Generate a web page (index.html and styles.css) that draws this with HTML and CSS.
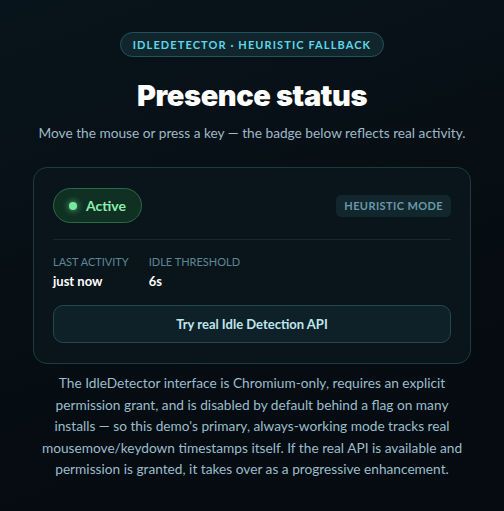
FILE: index.html
```html
<!DOCTYPE html>
<html lang="en">
<head>
<meta charset="utf-8">
<link rel="stylesheet" href="styles.css">
</head>
<body>
<main class="page">
  <div class="eyebrow">IDLEDETECTOR · HEURISTIC FALLBACK</div>
  <h1 class="title">Presence status</h1>
  <p class="subtitle">Move the mouse or press a key — the badge below reflects real activity.</p>
  <section class="card">
    <div class="card-top">
      <div class="status"><span class="dot"></span><span class="status-text">Active</span></div>
      <div class="mode">HEURISTIC MODE</div>
    </div>
    <div class="stats">
      <div class="stat">
        <div class="stat-label">LAST ACTIVITY</div>
        <div class="stat-value">just now</div>
      </div>
      <div class="stat">
        <div class="stat-label">IDLE THRESHOLD</div>
        <div class="stat-value">6s</div>
      </div>
    </div>
    <button class="try">Try real Idle Detection API</button>
  </section>
  <p class="note">The IdleDetector interface is Chromium-only, requires an explicit permission grant, and is disabled by default behind a flag on many installs — so this demo's primary, always-working mode tracks real mousemove/keydown timestamps itself. If the real API is available and permission is granted, it takes over as a progressive enhancement.</p>
</main>
</body>
</html>
```
FILE: styles.css
```css
html, body {
  margin: 0;
  height: 100%;
}
body {
  background: linear-gradient(160deg, #08141b 0%, #060d12 60%, #050b10 100%);
  font-family: Lato, "Noto Sans", sans-serif;
  color: #d8e6ec;
}
.page {
  display: flex;
  flex-direction: column;
  align-items: center;
  padding: 32px 33px 0 33px;
}
.eyebrow {
  font-size: 11px;
  font-weight: 700;
  letter-spacing: 1.1px;
  color: #5fd6ea;
  background: #10262c;
  border: 1px solid #24525a;
  border-radius: 999px;
  padding: 4px 12px;
  line-height: 15px;
}
.title {
  margin: 21px 0 0 0;
  font-family: Inter, "Noto Sans", sans-serif;
  font-size: 29px;
  font-weight: 900;
  color: #ffffff;
  line-height: 36px;
  letter-spacing: -0.4px;
}
.subtitle {
  margin: 9px 0 0 0;
  font-size: 13.7px;
  color: #9fb9c6;
  line-height: 20px;
  white-space: nowrap;
}
.card {
  margin-top: 24px;
  width: 100%;
  box-sizing: border-box;
  background: #0a151b;
  border: 1px solid #1c3b43;
  border-radius: 14px;
  padding: 20px 19px 20px 19px;
}
.card-top {
  display: flex;
  align-items: center;
  justify-content: space-between;
  padding-bottom: 16px;
  border-bottom: 1px solid #17282e;
}
.status {
  display: flex;
  align-items: center;
  gap: 9px;
  height: 33px;
  padding: 0 15px 0 15px;
  background: #0f3022;
  border: 1px solid #2a6a46;
  border-radius: 999px;
}
.dot {
  width: 8px;
  height: 8px;
  border-radius: 50%;
  background: #7ae9a0;
  box-shadow: 0 0 6px 1px rgba(122, 233, 160, 0.55);
}
.status-text {
  font-size: 14px;
  font-weight: 700;
  color: #8cefad;
}
.mode {
  font-size: 11px;
  font-weight: 700;
  letter-spacing: 0.4px;
  color: #6a98a8;
  background: #11262d;
  border-radius: 5px;
  padding: 3px 8px;
  line-height: 16px;
}
.stats {
  display: flex;
  gap: 20px;
  margin-top: 14px;
}
.stat-label {
  font-size: 11px;
  color: #5d8797;
  line-height: 15px;
}
.stat-value {
  font-size: 13px;
  font-weight: 700;
  color: #ffffff;
  margin-top: 4px;
  line-height: 16px;
}
.try {
  margin-top: 16px;
  width: 100%;
  height: 38px;
  background: #0f2128;
  border: 1px solid #234851;
  border-radius: 10px;
  color: #bfe6ef;
  font-family: inherit;
  font-size: 13px;
  font-weight: 700;
}
.note {
  margin: 8px 0 0 0;
  padding: 0 6px;
  text-align: center;
  font-size: 13.7px;
  line-height: 21.5px;
  color: #9bbccb;
}
```
